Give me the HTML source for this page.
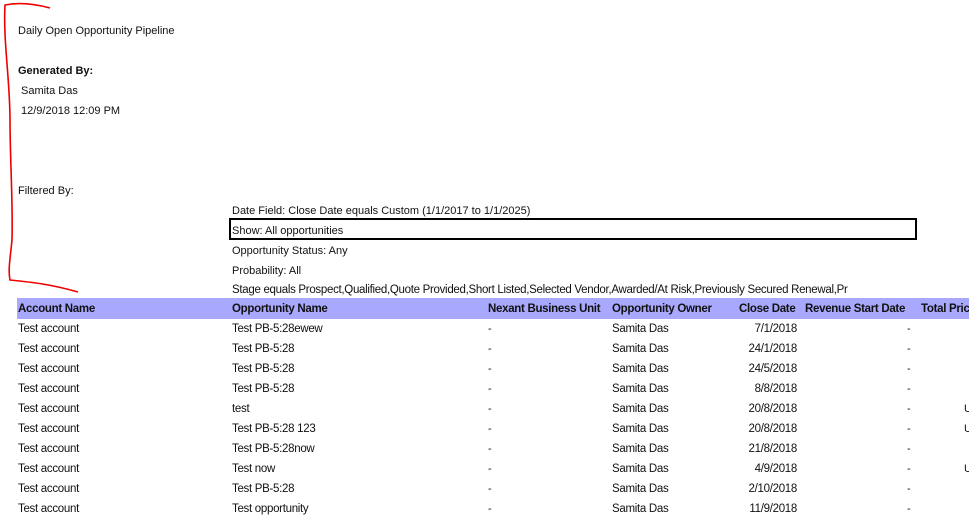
<!DOCTYPE html>
<html><head><style>
body{margin:0;width:969px;height:505px;overflow:hidden;background:#fff;position:relative;font-family:"Liberation Sans",sans-serif;font-size:11px;color:#111}
.t{position:absolute;white-space:nowrap;line-height:14px}
.n{letter-spacing:-0.3px;font-size:11.5px}
.b{font-weight:bold}
.hdr{position:absolute;left:17px;top:298px;width:952px;height:21px;background:#a8a8fe}
</style></head><body>
<svg style="position:absolute;left:0;top:0" width="100" height="300"><path d="M50 8 C35 4 20 2 5 5 C3 40 10 80 10 120 C10 160 13 200 12 240 C10 260 8 270 10 280 C30 282 50 284 78 292" stroke="#e00" stroke-width="1.6" fill="none"/></svg>
<div class="t" style="left:18px;top:24px">Daily Open Opportunity Pipeline</div>
<div class="t b" style="left:18px;top:64px">Generated By:</div>
<div class="t" style="left:21px;top:84px">Samita Das</div>
<div class="t" style="left:21px;top:104px">12/9/2018 12:09 PM</div>
<div class="t" style="left:18px;top:184px">Filtered By:</div>
<div class="t" style="left:232px;top:204px">Date Field: Close Date equals Custom (1/1/2017 to 1/1/2025)</div>
<div style="position:absolute;left:229px;top:218px;width:684px;height:18px;border:2px solid #000"></div>
<div class="t" style="left:232px;top:224px">Show: All opportunities</div>
<div class="t" style="left:232px;top:244px">Opportunity Status: Any</div>
<div class="t" style="left:232px;top:264px">Probability: All</div>
<div class="t n" style="left:232px;top:283px;width:684px;overflow:hidden">Stage equals Prospect,Qualified,Quote Provided,Short Listed,Selected Vendor,Awarded/At Risk,Previously Secured Renewal,Pr</div>
<div class="hdr"></div>
<div class="t b n" style="left:18px;top:302px">Account Name</div>
<div class="t b n" style="left:232px;top:302px">Opportunity Name</div>
<div class="t b n" style="left:488px;top:302px">Nexant Business Unit</div>
<div class="t b n" style="left:612px;top:302px">Opportunity Owner</div>
<div class="t b n" style="left:739px;top:302px">Close Date</div>
<div class="t b n" style="left:805px;top:302px">Revenue Start Date</div>
<div class="t b n" style="left:921px;top:302px">Total Price</div>
<div id="rows"></div>
<script>
var d=[["Test PB-5:28ewew","7/1/2018",""],["Test PB-5:28","24/1/2018",""],["Test PB-5:28","24/5/2018",""],["Test PB-5:28","8/8/2018",""],["test","20/8/2018","U"],["Test PB-5:28 123","20/8/2018","U"],["Test PB-5:28now","21/8/2018",""],["Test now","4/9/2018","U"],["Test PB-5:28","2/10/2018",""],["Test opportunity","11/9/2018",""]];
var h="";d.forEach(function(r,i){var y=322+i*20;
h+='<div class="t n" style="left:18px;top:'+y+'px">Test account</div><div class="t n" style="left:232px;top:'+y+'px">'+r[0]+'</div><div class="t" style="left:488px;top:'+y+'px">-</div><div class="t n" style="left:612px;top:'+y+'px">Samita Das</div><div class="t n" style="left:700px;width:97px;text-align:right;top:'+y+'px">'+r[1]+'</div><div class="t" style="left:907px;top:'+y+'px">-</div><div class="t" style="left:964px;top:'+y+'px">'+r[2]+'</div>';});
document.getElementById("rows").innerHTML=h;
</script>
</body></html>
